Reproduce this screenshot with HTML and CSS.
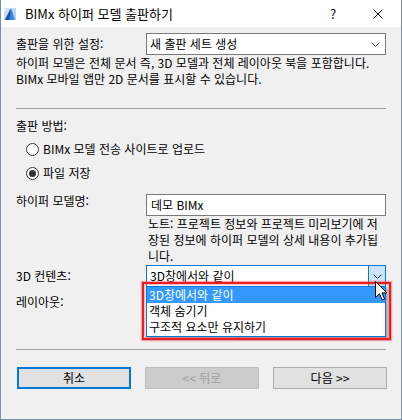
FILE: index.html
```html
<!DOCTYPE html>
<html lang="ko">
<head>
<meta charset="utf-8">
<title>BIMx 하이퍼 모델 출판하기</title>
<link rel="stylesheet" href="styles.css">
</head>
<body>
<div class="window">
  <div class="titlebar">
    <svg class="app-icon" width="12" height="12" viewBox="0 0 12 12">
      <defs>
        <linearGradient id="ig" x1="0" y1="0" x2="1" y2="1">
          <stop offset="0" stop-color="#dbe9f9"/>
          <stop offset="1" stop-color="#a9caf0"/>
        </linearGradient>
        <linearGradient id="sg" x1="0" y1="0" x2="1" y2="0">
          <stop offset="0" stop-color="#1d5fc9"/>
          <stop offset="1" stop-color="#4a95ec"/>
        </linearGradient>
      </defs>
      <rect x="0" y="0" width="12" height="12" fill="url(#ig)"/>
      <path d="M1 12 L6.5 1 L7.5 1 L11 12 Z" fill="url(#sg)"/>
      <path d="M1 12 L6.5 1 L5 12 Z" fill="#174ea8"/>
    </svg>
    <span class="title">BIMx 하이퍼 모델 출판하기</span>
    <span class="help">?</span>
    <svg class="close" width="10" height="10" viewBox="0 0 10 10">
      <path d="M0.5 0.5 L9.5 9.5 M9.5 0.5 L0.5 9.5" stroke="#111" stroke-width="1" fill="none"/>
    </svg>
  </div>

  <div class="content">
    <div class="row row-settings">
      <span class="label">출판을 위한 설정:</span>
      <div class="select">
        <span class="select-text">새 출판 세트 생성</span>
        <svg class="chevron" width="9" height="5" viewBox="0 0 9 5">
          <path d="M0.5 0.5 L4.5 4.5 L8.5 0.5" stroke="#444" stroke-width="1" fill="none"/>
        </svg>
      </div>
    </div>
    <p class="desc">하이퍼 모델은 전체 문서 즉, 3D 모델과 전체 레이아웃 북을 포함합니다.<br>BIMx 모바일 앱만 2D 문서를 표시할 수 있습니다.</p>

    <div class="sep sep1"></div>

    <div class="section-label">출판 방법:</div>
    <div class="radio radio-1"><span class="radio-circle"></span><span>BIMx 모델 전송 사이트로 업로드</span></div>
    <div class="radio radio-2"><span class="radio-circle checked"></span><span>파일 저장</span></div>

    <div class="row row-name">
      <span class="label label-top">하이퍼 모델명:</span>
      <div class="control">
        <div class="input">데모 BIMx</div>
        <p class="note">노트: 프로젝트 정보와 프로젝트 미리보기에 저<br>장된 정보에 하이퍼 모델의 상세 내용이 추가됩<br>니다.</p>
      </div>
    </div>

    <div class="row row-3d">
      <span class="label">3D 컨텐츠:</span>
      <div class="select select-open">
        <span class="select-text">3D창에서와 같이</span>
        <span class="drop-btn">
          <svg class="chevron" width="9" height="5" viewBox="0 0 9 5">
            <path d="M0.5 0.5 L4.5 4.5 L8.5 0.5" stroke="#333" stroke-width="1" fill="none"/>
          </svg>
        </span>
      </div>
    </div>

    <div class="row row-layout">
      <span class="label label-top">레이아웃:</span>
    </div>
    <div class="options-row"><div class="btn btn-options">옵션...</div></div>

    <div class="sep sep2"></div>

    <div class="buttons">
      <div class="btn btn-default">취소</div>
      <div class="btn btn-disabled">&lt;&lt; 뒤로</div>
      <div class="btn">다음 &gt;&gt;</div>
    </div>
  </div>

  <ul class="dropdown">
    <li class="item selected">3D창에서와 같이</li>
    <li class="item">객체 숨기기</li>
    <li class="item">구조적 요소만 유지하기</li>
  </ul>
  <div class="highlight-box"></div>
  <svg class="cursor" width="13" height="20" viewBox="0 0 13 20">
    <path d="M0.5 0.5 L0.5 16.5 L4.5 12.8 L7.2 19 L9.6 18 L7 11.9 L12 11.9 Z" fill="#fff" stroke="#000" stroke-width="1" stroke-linejoin="miter"/>
  </svg>
</div>
</body>
</html>
```

FILE: styles.css
```css
* { box-sizing: border-box; }
html, body { margin: 0; padding: 0; }
body {
  width: 402px;
  height: 420px;
  overflow: hidden;
  background: #f0f0f0;
  font-family: "Noto Sans CJK KR", "Noto Sans", sans-serif;
  font-size: 12px;
  color: #000;
}
.window {
  position: relative;
  width: 402px;
  height: 420px;
  background: #f0f0f0;
  border-left: 1px solid #7b8ea5;
  border-right: 1px solid #7b8ea5;
  border-bottom: 1px solid #7b8ea5;
}
.titlebar {
  height: 27px;
  background: #fff;
  display: flex;
  align-items: center;
}
.app-icon { margin-left: 3px; flex: none; }
.title { margin-left: 9px; font-size: 13px; line-height: 17px; }
.help {
  margin-left: auto;
  width: 16px;
  text-align: center;
  font-size: 13px;
  line-height: 16px;
}
.close { margin-left: 32px; margin-right: 18px; flex: none; }

.content { padding: 0 15px; }

.row {
  display: grid;
  grid-template-columns: 130px 240px;
}
.label { line-height: 16px; align-self: center; }
.label-top { align-self: start; line-height: 14px; }

.row-settings { margin-top: 6px; }
.select {
  height: 22px;
  border: 1px solid #7a7a7a;
  background: #fff;
  display: flex;
  align-items: center;
  padding-left: 3px;
}
.select-text { flex: 1; line-height: 16px; }
.row-settings .chevron { margin-right: 5px; }

.desc { margin: 0; line-height: 16px; }

.sep { height: 1px; background: #a0a0a0; }
.sep1 { margin-top: 21px; }

.section-label { margin-top: 9px; line-height: 16px; }

.radio {
  display: flex;
  align-items: center;
  height: 16px;
  padding-left: 10px;
  line-height: 16px;
}
.radio-1 { margin-top: 7px; }
.radio-2 { margin-top: 8px; }
.radio-circle {
  width: 13px;
  height: 13px;
  border: 1px solid #333;
  border-radius: 50%;
  background: #fff;
  margin-right: 4px;
  display: flex;
  align-items: center;
  justify-content: center;
  flex: none;
}
.radio-circle.checked::after {
  content: "";
  width: 7px;
  height: 7px;
  border-radius: 50%;
  background: #333;
}

.row-name { margin-top: 13px; }
.input {
  height: 22px;
  border: 1px solid #7a7a7a;
  background: #fff;
  padding-left: 4px;
  display: flex;
  align-items: center;
  line-height: 16px;
}
.note { margin: 0; padding-left: 2px; line-height: 16px; }

.row-3d { margin-top: 1px; }
.select-open { border-color: #0078d7; padding-right: 0; }
.drop-btn {
  width: 17px;
  height: 20px;
  background: #cce4f7;
  border-left: 1px solid #0078d7;
  display: flex;
  align-items: center;
  justify-content: center;
}

.row-layout { margin-top: 8px; }

.options-row { display: flex; justify-content: flex-end; margin-top: 7px; }
.btn {
  width: 114px;
  height: 22px;
  background: #e1e1e1;
  border: 1px solid #adadad;
  display: flex;
  align-items: center;
  justify-content: center;
  line-height: 16px;
}
.btn-options { width: 149px; height: 23px; padding-top: 6px; }
.btn-default { border: 2px solid #0078d7; }
.btn-disabled { background: #cccccc; border-color: #bfbfbf; color: #a0a0a0; }

.sep2 { margin-top: 10px; }

.buttons {
  display: flex;
  justify-content: space-between;
  margin-top: 17px;
  margin-left: 1px;
  margin-right: -1px;
}

.dropdown {
  position: absolute;
  left: 145px;
  top: 286px;
  width: 240px;
  height: 51px;
  margin: 0;
  padding: 0;
  list-style: none;
  background: #fff;
  border: 1px solid #0078d7;
  box-shadow: 2px 2px 3px rgba(0,0,0,0.35);
}
.item {
  height: 16px;
  line-height: 16px;
  padding-left: 2px;
}
.item.selected { background: #3399ff; color: #fff; }

.highlight-box {
  position: absolute;
  left: 141px;
  top: 282px;
  width: 249px;
  height: 58px;
  border: 2px solid #ee1c24;
  box-shadow: 0 0 1px 1px rgba(240, 70, 70, 0.45), inset 0 0 1px 1px rgba(240, 70, 70, 0.35);
}
.cursor {
  position: absolute;
  left: 374px;
  top: 281px;
}
```
